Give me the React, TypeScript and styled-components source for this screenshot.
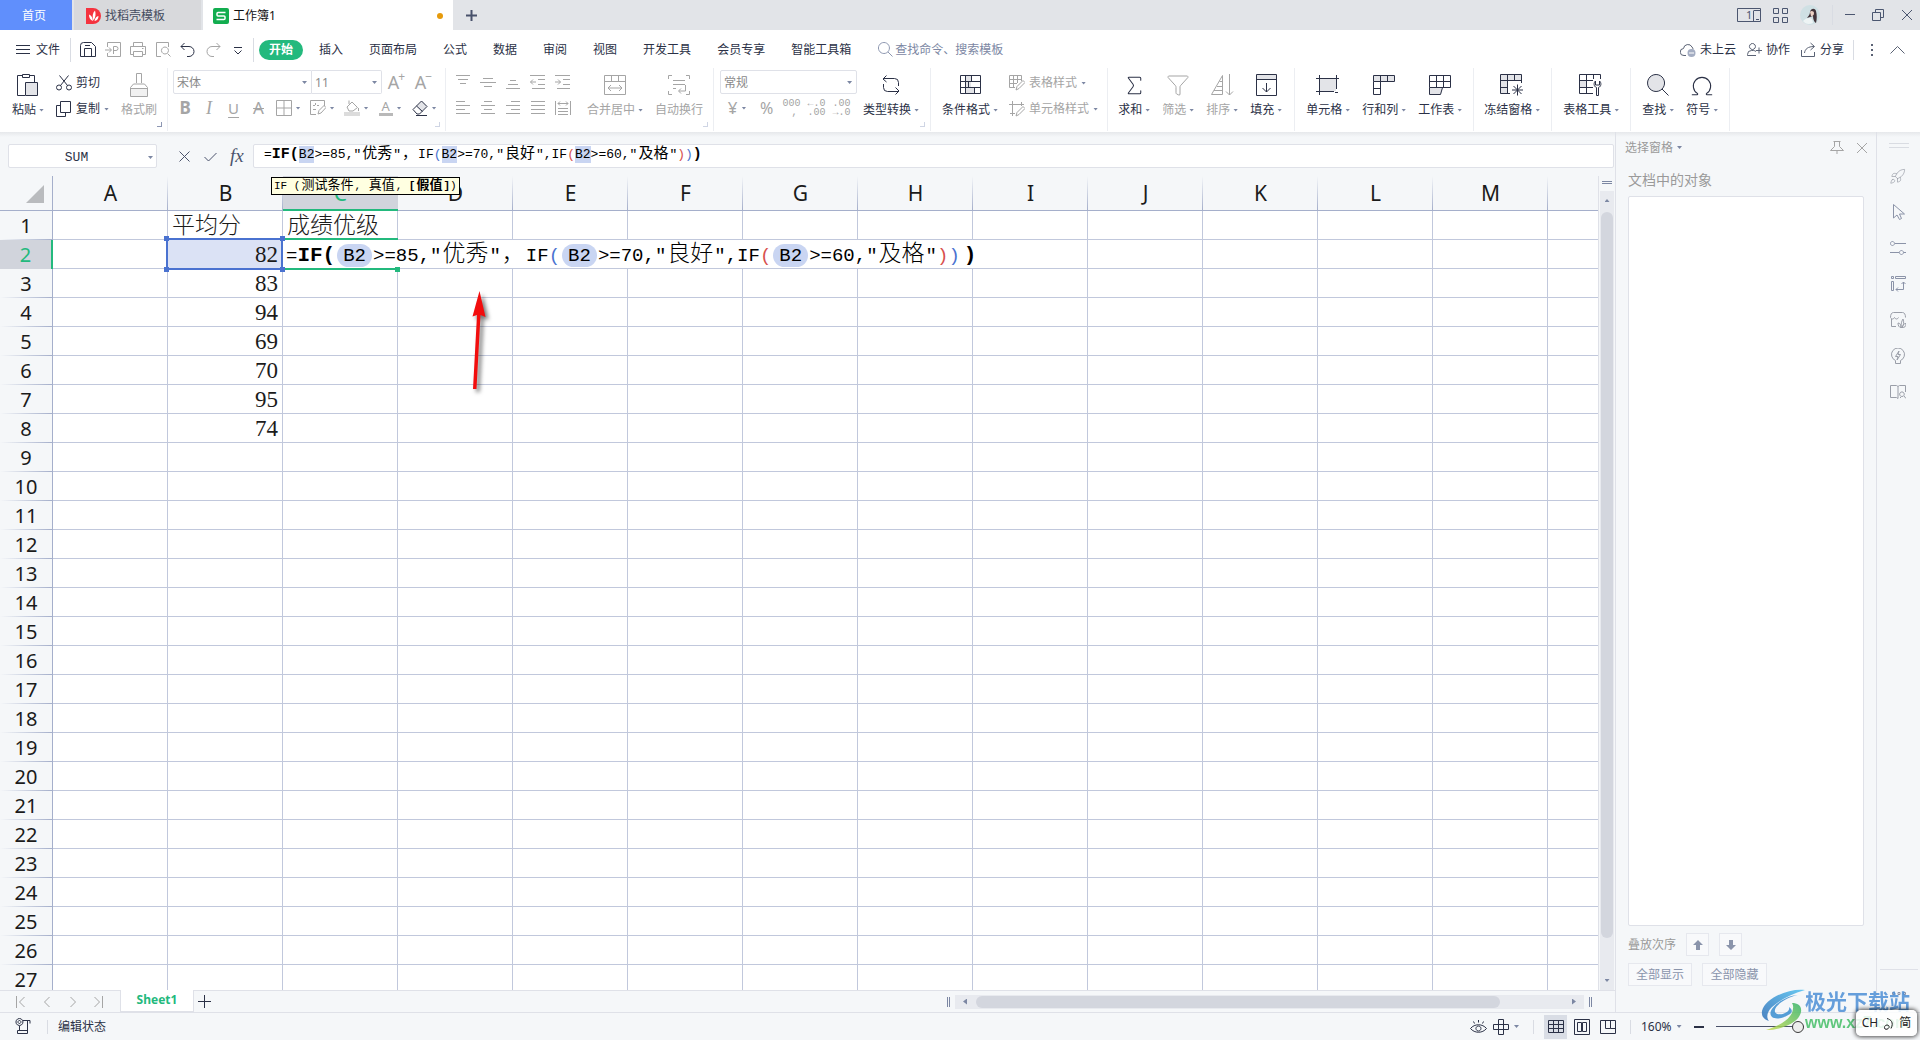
import React from "react";
import styled, { createGlobalStyle, css } from "styled-components";
import { Sigma, Omega, Rocket, Funnel } from "lucide-react";

const ink = "#2b3146";
const gray = "#a5a5a5";
const slate = "#7c87a3";
const line = "#dfe1e8";
const green = "#23b97d";
const blue = "#4a72d0";
const ui = `"Noto Sans", "Noto Sans CJK SC", sans-serif`;
const mono = `"Liberation Mono", "Noto Sans CJK SC", monospace`;
const song = `"Liberation Serif", "Noto Sans CJK SC", serif`;

const GlobalStyle = createGlobalStyle`
  *, *::before, *::after { box-sizing: border-box; }
  body { margin: 0; background: #f5f7f9; color: ${ink}; font: 12px/18px ${ui}; }
  button, input, select { font: inherit; color: inherit; background: none; border: 0; padding: 0; margin: 0; }
  button { white-space: nowrap; cursor: default; }
  svg { display: block; flex: none; }
`;

const Shell = styled.div`
  position: relative;
  display: flex;
  flex-direction: column;
  height: 100vh;
  overflow: hidden;
`;

/* ---------- shared ---------- */
const Caret = styled.span<{ $up?: boolean }>`
  flex: none;
  width: 5px;
  height: 3px;
  background: ${slate};
  clip-path: ${(p) => (p.$up ? "polygon(0 100%, 100% 100%, 50% 0)" : "polygon(0 0, 100% 0, 50% 100%)")};
`;
const SideCaret = styled.span<{ $left?: boolean }>`
  width: 4px;
  height: 6px;
  background: ${slate};
  clip-path: ${(p) => (p.$left ? "polygon(100% 0, 100% 100%, 0 50%)" : "polygon(0 0, 100% 50%, 0 100%)")};
`;
const Rule = styled.span<{ $h: number }>`
  width: 1px;
  height: ${(p) => p.$h}px;
  background: #d9dce3;
`;
const Spacer = styled.div`
  flex: 1;
`;

type IcoProps = { w?: number; h?: number; d: string; c?: string; fill?: string; fillC?: string; sw?: number; children?: React.ReactNode };
const Ico = ({ w = 16, h = 16, d, c = ink, fill, fillC = "#e3e4e8", sw = 1, children }: IcoProps) => (
  <svg width={w} height={h} viewBox={`0 0 ${w} ${h}`} fill="none" stroke={c} strokeWidth={sw} aria-hidden="true">
    {fill && <path d={fill} fill={fillC} stroke="none" />}
    <path d={d} />
    {children}
  </svg>
);

/* ---------- title bar ---------- */
const TitleBar = styled.header`
  display: flex;
  align-items: center;
  flex: none;
  height: 30px;
  background: #e2e4e8;
`;
const DocTab = styled.button<{ $w: number; $bg: string; $c?: string; $pad: number }>`
  display: flex;
  align-items: center;
  gap: 4px;
  width: ${(p) => p.$w}px;
  height: 30px;
  margin-right: 2px;
  padding: 2px ${(p) => p.$pad}px 0;
  background: ${(p) => p.$bg};
  color: ${(p) => p.$c || ink};
`;
const Dot = styled.span`
  width: 6px;
  height: 6px;
  margin-left: auto;
  border-radius: 50%;
  background: #e69a0b;
`;
const AddDoc = styled.button`
  display: flex;
  padding: 0 10px;
`;
const WindowTools = styled.div`
  display: flex;
  align-items: center;
  gap: 12px;
  padding-right: 7px;
  button { display: flex; }
`;
const WinBtns = styled.div`
  display: flex;
  align-items: center;
  gap: 17px;
`;

/* ---------- menu bar ---------- */
const MenuBar = styled.nav`
  display: flex;
  align-items: center;
  flex: none;
  height: 38px;
  padding: 1px 15px 0 16px;
  background: #fff;
`;
const FileBtn = styled.button`
  display: flex;
  align-items: center;
  gap: 6px;
  margin-right: 10px;
`;
const QuickBar = styled.div`
  display: flex;
  align-items: center;
  gap: 9px;
  padding: 0 7px 0 9px;
  button { display: flex; }
`;
const ActiveMenu = styled.button`
  width: 44px;
  height: 20px;
  margin: 0 3px 0 5px;
  border-radius: 10px;
  background: ${green};
  color: #fff;
  font-weight: 700;
`;
const MenuItem = styled.button`
  padding: 0 13px;
`;
const SearchBox = styled.label`
  display: flex;
  align-items: center;
  gap: 2px;
  margin-left: 14px;
  input { width: 130px; color: ${slate}; outline: none; }
  input::placeholder { color: ${slate}; opacity: 1; }
`;
const CloudTools = styled.div`
  display: flex;
  align-items: center;
  gap: 11px;
  button { display: flex; align-items: center; gap: 4px; }
`;
const MoreTools = styled.div`
  display: flex;
  align-items: center;
  gap: 17px;
  margin-left: 9px;
  button { display: flex; }
`;

/* ---------- ribbon ---------- */
const Ribbon = styled.section`
  display: flex;
  flex: none;
  height: 64px;
  background: #fff;
  border-bottom: 1px solid #fff;
`;
const Group = styled.div<{ $gap?: number; $pl?: number; $pr?: number }>`
  position: relative;
  display: flex;
  gap: ${(p) => p.$gap ?? 12}px;
  padding: 0 ${(p) => p.$pr ?? 11}px 0 ${(p) => p.$pl ?? 11}px;
  border-right: 1px solid #eceef2;
`;
const Corner = styled.span<{ $dark?: boolean }>`
  position: absolute;
  right: 5px;
  bottom: 4px;
  width: 5px;
  height: 5px;
  border: solid ${(p) => (p.$dark ? "#8d97b3" : "#cfd5e4")};
  border-width: 0 1px 1px 0;
`;
const Big = styled.button<{ $off?: boolean }>`
  display: flex;
  flex-direction: column;
  align-items: center;
  gap: 4px;
  padding-top: 5px;
  height: 60px;
  color: ${(p) => (p.$off ? gray : ink)};
`;
const BigIcon = styled.span`
  display: grid;
  place-items: center;
  height: 24px;
`;
const Label = styled.span`
  display: flex;
  align-items: center;
  gap: 3px;
`;
const Rows = styled.div`
  display: flex;
  flex-direction: column;
  gap: 2px;
  padding-top: 2px;
`;
const Line = styled.div<{ $gap?: number; $pl?: number }>`
  display: flex;
  align-items: center;
  gap: ${(p) => p.$gap ?? 0}px;
  padding-left: ${(p) => p.$pl ?? 0}px;
  height: 24px;
`;
const Small = styled.button<{ $off?: boolean }>`
  display: flex;
  align-items: center;
  gap: 4px;
  height: 24px;
  padding-top: 2px;
  color: ${(p) => (p.$off ? gray : ink)};
`;
const Cell = styled.button<{ $w?: number }>`
  display: flex;
  align-items: center;
  justify-content: center;
  gap: 4px;
  width: ${(p) => p.$w ?? 25}px;
  height: 24px;
  color: ${gray};
`;
const Glyph = styled.span<{ $b?: boolean; $i?: boolean; $u?: boolean; $s?: boolean; $size?: number }>`
  font-size: ${(p) => p.$size ?? 17}px;
  line-height: 18px;
  font-weight: ${(p) => (p.$b ? 700 : 400)};
  font-style: ${(p) => (p.$i ? "italic" : "normal")};
  text-decoration: ${(p) => (p.$u ? "underline" : p.$s ? "line-through" : "none")};
  text-decoration-thickness: 1px;
  text-underline-offset: 3px;
  ${(p) => p.$i && css`font-family: "Liberation Serif", serif;`}
`;
const BarGlyph = styled.span`
  width: 14px;
  height: 15px;
  border-bottom: 3px solid #b9b9b9;
  font-size: 13px;
  line-height: 11px;
`;
const Sup = styled.span`
  align-self: flex-start;
  margin-left: -5px;
  font-size: 12px;
  line-height: 14px;
`;
const Digits = styled.span`
  display: flex;
  flex-direction: column;
  font: 10px/9px "Liberation Mono", monospace;
  white-space: pre;
`;
const Picker = styled.label<{ $w: number; $side?: "l" | "r" }>`
  position: relative;
  display: block;
  width: ${(p) => p.$w}px;
  height: 24px;
  border: 1px solid ${line};
  border-radius: ${(p) => (p.$side === "l" ? "2px 0 0 2px" : p.$side === "r" ? "0 2px 2px 0" : "2px")};
  ${(p) => p.$side === "r" && css`border-left: 0;`}
  color: #8a8a8a;
  select { width: 100%; height: 22px; padding: 2px 0 0 3px; appearance: none; outline: none; opacity: 1; }
  ${Caret} { position: absolute; right: 4px; top: 10px; }
`;
const Pickers = styled.div`
  display: flex;
`;

/* ---------- body ---------- */
const Body = styled.main`
  display: flex;
  flex: 1;
  min-height: 0;
  border-bottom: 1px solid ${line};
  background: linear-gradient(#e6e8eb, #f5f7f9 5px);
`;
const Sheet = styled.div`
  display: flex;
  flex-direction: column;
  flex: 1;
  min-width: 0;
`;
const FormulaRow = styled.div`
  position: relative;
  z-index: 5;
  display: flex;
  flex: none;
  height: 44px;
  padding: 12px 1px 8px 8px;
`;
const NameBox = styled.label`
  position: relative;
  width: 149px;
  height: 24px;
  border: 1px solid ${line};
  border-radius: 2px;
  background: #fff;
  input { width: 135px; height: 22px; padding-top: 2px; text-align: center; font: 13px ${mono}; outline: none; }
  ${Caret} { position: absolute; right: 3px; top: 11px; }
`;
const FxTools = styled.div`
  display: flex;
  align-items: center;
  gap: 13px;
  width: 96px;
  padding-left: 21px;
  button { display: flex; }
`;
const Fx = styled.span`
  font: italic 19px/20px "Liberation Serif", serif;
  color: #4b536c;
`;
const FormulaInput = styled.div`
  position: relative;
  flex: 1;
  height: 24px;
  padding-left: 10px;
  border: 1px solid ${line};
  border-radius: 2px;
  background: #fff;
`;
const BarText = styled.div`
  color: #000;
  font: 13px/20px ${mono};
  white-space: pre;
  outline: none;
  b { font-size: 15px; }
  i { padding: 0 1px; font-style: normal; font-size: 15px; }
  mark { padding: 1px 0; background: #c9d5f2; color: inherit; }
`;
const Hint = styled.div`
  position: absolute;
  left: 17px;
  top: 32px;
  height: 18px;
  padding: 0 2px;
  border: 1px solid #000;
  background: #ffffe1;
  color: #000;
  font: 11px/16px ${mono};
  white-space: pre;
  i { padding: 0 1px; font-style: normal; font-size: 13px; }
`;
const Red = styled.span`
  color: #d8504d;
`;
const Blue = styled.span`
  color: ${blue};
`;

const GridArea = styled.div`
  display: flex;
  flex: 1;
  min-height: 0;
`;
const Clip = styled.div`
  position: relative;
  flex: 1;
  min-width: 0;
  overflow: hidden;
  background: #fff;
`;
const Table = styled.table`
  width: 100%;
  table-layout: fixed;
  border-spacing: 0;
  color: #1b1b1b;
`;
const CornerHead = styled.th`
  width: 53px;
  height: 35px;
  padding: 0;
  background: #f5f7f9;
  border-right: 1px solid #a5afcb;
  border-bottom: 1px solid #a5afcb;
  &::after {
    content: "";
    display: block;
    width: 18px;
    height: 18px;
    margin: 2px 0 0 26px;
    background: #b9bbbe;
    clip-path: polygon(100% 0, 100% 100%, 0 100%);
  }
`;
const ColHead = styled.th<{ $on?: boolean; $rest?: boolean }>`
  width: ${(p) => (p.$rest ? "auto" : "115px")};
  height: 35px;
  padding: 0;
  border-bottom: ${(p) => (p.$on ? `2px solid ${green}` : "1px solid #a5afcb")};
  background: ${(p) =>
    p.$on
      ? "#d1d4dc"
      : p.$rest
        ? "#f5f7f9"
        : "linear-gradient(#f5f7f9, #a5afcb) right / 1px 100% no-repeat #f5f7f9"};
  color: ${(p) => (p.$on ? green : "#1b1b1b")};
  font: 21px/32px ${ui};
`;
const RowHead = styled.th<{ $on?: boolean }>`
  height: 29px;
  padding: 0;
  border-right: ${(p) => (p.$on ? `2px solid ${green}` : "1px solid #a5afcb")};
  background: ${(p) =>
    p.$on ? "#d1d4dc" : "linear-gradient(90deg, #f5f7f9, #a5afcb) bottom / 100% 1px no-repeat #f5f7f9"};
  color: ${(p) => (p.$on ? green : "#1b1b1b")};
  font: 20px/28px ${ui};
`;
const Td = styled.td<{ $num?: boolean; $ref?: boolean; $rest?: boolean; $z?: number }>`
  position: relative;
  z-index: ${(p) => p.$z ?? "auto"};
  height: 29px;
  padding: 2px 4px 0;
  border-right: ${(p) => (p.$rest ? "0" : "1px solid #c1c8dc")};
  border-bottom: 1px solid #c1c8dc;
  background: ${(p) => (p.$ref ? "#dbe2f5" : "#fff")};
  text-align: ${(p) => (p.$num ? "right" : "left")};
  font: 300 23px/26px ${song};
  white-space: nowrap;
`;
const RefFrame = styled.span`
  position: absolute;
  inset: -2px -1px -2px -2px;
  border: 2px solid ${blue};
`;
const Handle = styled.span<{ $x: "left" | "right"; $y: "top" | "bottom"; $c: string }>`
  position: absolute;
  ${(p) => p.$x}: -4px;
  ${(p) => p.$y}: -4px;
  width: 5px;
  height: 5px;
  background: ${(p) => p.$c};
`;
const CellFrame = styled.span`
  position: absolute;
  inset: -2px -1px -2px 1px;
  border: solid ${green};
  border-width: 2px 0;
  ${Handle} { right: -2px; bottom: -4px; }
`;
const CellEditor = styled.div`
  position: absolute;
  left: 0;
  top: 0;
  height: 28px;
  padding: 2px 6px 0 3px;
  background: #fff;
  color: #000;
  font: 19px/26px ${mono};
  white-space: pre;
  outline: none;
  b { font-size: 21px; }
  b:last-child { margin-left: 4px; }
  i { padding: 0 1px; font-style: normal; font-weight: 300; font-size: 23px; }
  mark {
    display: inline-block;
    height: 23px;
    margin: 0 1px 0 2px;
    padding: 0 6px;
    border-radius: 12px;
    background: #c9d5f2;
    color: inherit;
    line-height: 24px;
  }
`;
const Arrow = styled.svg`
  position: absolute;
  left: 464px;
  top: 112px;
  overflow: visible;
  filter: drop-shadow(3px 3px 2px rgba(0, 0, 0, 0.55));
`;
const Gutter = styled.div`
  display: flex;
  flex-direction: column;
  align-items: center;
  flex: none;
  width: 17px;
  padding-top: 5px;
  border-left: 1px solid ${line};
`;
const SplitMark = styled.span<{ $v?: boolean }>`
  flex: none;
  width: ${(p) => (p.$v ? 3 : 10)}px;
  height: ${(p) => (p.$v ? 10 : 3)}px;
  border: solid ${slate};
  border-width: ${(p) => (p.$v ? "0 1px" : "1px 0")};
`;
const VTrack = styled.div`
  display: flex;
  flex-direction: column;
  align-items: center;
  justify-content: space-between;
  flex: 1;
  width: 14px;
  margin-top: 7px;
  padding: 8px 0;
  background: #e8eaef;
`;
const VThumb = styled.span`
  flex: 1;
  width: 12px;
  margin: 10px 0 41px;
  border-radius: 6px;
  background: #d3d6de;
`;
const SheetBar = styled.div`
  display: flex;
  align-items: center;
  flex: none;
  height: 22px;
  border-top: 1px solid ${line};
`;
const SheetNav = styled.div`
  display: flex;
  gap: 15px;
  width: 120px;
  padding-left: 15px;
  button { display: flex; }
`;
const SheetTab = styled.button`
  width: 74px;
  height: 22px;
  margin-top: -2px;
  border: solid ${line};
  border-width: 0 1px 1px;
  background: #fff;
  color: ${green};
  font-weight: 700;
`;
const AddSheet = styled.button`
  display: flex;
  margin-left: 4px;
`;
const HScroll = styled.div`
  display: flex;
  align-items: center;
  gap: 5px;
  width: 668px;
  padding-right: 23px;
`;
const HTrack = styled.div`
  display: flex;
  align-items: center;
  flex: 1;
  height: 14px;
  padding: 0 8px;
  background: #e8eaef;
`;
const HThumb = styled.span`
  flex: 1;
  height: 12px;
  margin: 0 72px 0 9px;
  border-radius: 6px;
  background: #d3d6de;
`;

/* ---------- side panel ---------- */
const Panel = styled.aside`
  display: flex;
  flex-direction: column;
  flex: none;
  width: 262px;
  padding: 0 12px;
  border: solid ${line};
  border-width: 0 1px;
  color: #9a9a9a;
`;
const PanelHead = styled.div`
  display: flex;
  align-items: center;
  gap: 12px;
  height: 31px;
  margin: 0 -4px 0 -3px;
  button { display: flex; align-items: center; gap: 4px; }
`;
const PanelTitle = styled.h2`
  margin: 6px 0 5px;
  font: 14px/22px ${ui};
`;
const ObjectList = styled.div`
  flex: 1;
  border: 1px solid ${line};
  border-radius: 2px;
  background: #fff;
`;
const OrderRow = styled.div`
  display: flex;
  align-items: center;
  gap: 10px;
  height: 23px;
  margin-top: 7px;
`;
const PanelFoot = styled.div`
  height: 86px;
`;
const PanelBtn = styled.button<{ $w: number }>`
  display: grid;
  place-items: center;
  width: ${(p) => p.$w}px;
  height: 23px;
  border: 1px solid #e6e8ee;
  background: #f8f9fb;
  color: #8a94ab;
`;
const Strip = styled.aside`
  display: flex;
  flex-direction: column;
  align-items: center;
  flex: none;
  width: 43px;
  padding: 11px 0;
`;
const StripIcons = styled.div`
  display: flex;
  flex-direction: column;
  flex: 1;
  padding-top: 10px;
  button { display: grid; place-items: center; width: 40px; height: 36px; padding-right: 2px; }
`;
const StripEnd = styled.div`
  display: flex;
  justify-content: center;
  width: 38px;
  height: 32px;
  padding-top: 21px;
  border-top: 1px solid ${line};
`;

/* ---------- status bar ---------- */
const StatusBar = styled.footer`
  display: flex;
  align-items: center;
  flex: none;
  height: 27px;
  padding-left: 15px;
`;
const StatusRule = styled(Rule)`
  margin: 0 10px 0 15px;
`;
const StatusTools = styled.div`
  display: flex;
  align-items: center;
  width: 450px;
  button { display: flex; align-items: center; justify-content: center; height: 24px; }
`;
const ViewBtn = styled.button<{ $on?: boolean }>`
  width: ${(p) => (p.$on ? 23 : 26)}px;
  background: ${(p) => (p.$on ? "#d9dde5" : "none")};
`;
const ReadBtn = styled.button`
  gap: 4px;
`;
const ZoomBtn = styled.button`
  gap: 5px;
  margin: 0 12px 0 10px;
`;
const Gap = styled.span<{ $w?: number }>`
  width: ${(p) => p.$w ?? 6}px;
`;
const Zoom = styled.input`
  width: 88px;
  height: 16px;
  margin-left: 12px;
  appearance: none;
  background: linear-gradient(#4a5169, #4a5169) center / 100% 1px no-repeat;
  &::-webkit-slider-thumb {
    appearance: none;
    width: 12px;
    height: 12px;
    border: 1px solid #3a3a3a;
    border-radius: 50%;
    background: #ededed;
  }
`;
const Watermark = styled.div`
  position: absolute;
  right: 10px;
  bottom: 8px;
  display: flex;
  opacity: 0.85;
  pointer-events: none;
`;
const MarkText = styled.div`
  display: flex;
  flex-direction: column;
  color: #4d8fd6;
  font: 700 21px/26px ${ui};
  span { color: #45bf68; font: 700 16px/18px "Liberation Sans", sans-serif; }
`;
const Ime = styled.div`
  position: absolute;
  right: 3px;
  bottom: 4px;
  display: flex;
  align-items: center;
  justify-content: center;
  gap: 4px;
  width: 61px;
  height: 26px;
  border-radius: 5px;
  background: rgba(255, 255, 255, 0.85);
  box-shadow: 0 0 4px 1px rgba(0, 0, 0, 0.7);
  color: #222;
`;

/* ---------- data ---------- */
const cols = ["A", "B", "C", "D", "E", "F", "G", "H", "I", "J", "K", "L", "M"];
const scores = [82, 83, 94, 69, 70, 95, 74];
const menus = ["插入", "页面布局", "公式", "数据", "审阅", "视图", "开发工具", "会员专享", "智能工具箱"];

const Formula = () => (
  <>
    =<b>IF(</b>
    <mark>B2</mark>&gt;=85,"<i>优秀</i>"<i>，</i>IF<Blue>(</Blue>
    <mark>B2</mark>&gt;=70,"<i>良好</i>",IF<Red>(</Red>
    <mark>B2</mark>&gt;=60,"<i>及格</i>"<Red>)</Red>
    <Blue>)</Blue>
    <b>)</b>
  </>
);

const BigButton = ({ label, icon, off, caret = true }: { label: string; icon: React.ReactNode; off?: boolean; caret?: boolean }) => (
  <Big $off={off}>
    <BigIcon>{icon}</BigIcon>
    <Label>
      {label}
      {caret && <Caret />}
    </Label>
  </Big>
);

const align = {
  top: "M1 1.5h14M3 5.5h10M5 9.5h6",
  mid: "M3 4.5h10M0 8.5h16M4 12.5h8",
  bot: "M5 6.5h6M3 10.5h10M1 14.5h14",
  outdent: "M0 1.5h15M8 5.5h7M8 10.5h7M2 14.5h13M6 8H0.5M3 5.5L.5 8L3 10.5",
  indent: "M0 1.5h15M8 5.5h7M8 10.5h7M2 14.5h13M0 8h5.5M3 5.5L5.5 8L3 10.5",
  left: "M1 1.5h9M1 5.5h14M1 9.5h9M1 13.5h14",
  center: "M4 1.5h8M1 5.5h14M4 9.5h8M1 13.5h14",
  right: "M6 1.5h9M1 5.5h14M6 9.5h9M1 13.5h14",
  just: "M1 1.5h14M1 5.5h14M1 9.5h14M1 13.5h14",
  dist: "M.5 1v14M15.5 1v14M3 3.5h10M5 1.5L3 3.5L5 5.5M11 1.5L13 3.5L11 5.5M3 8.5h10M3 11.5h10M3 14.5h10",
};

export default function App() {
  return (
    <Shell>
      <GlobalStyle />
      <TitleBar>
        <DocTab $w={72} $bg="#608ffc" $c="#fff" $pad={22}>首页</DocTab>
        <DocTab $w={127} $bg="#d8d9dc" $pad={12} $c="#454c60">
          <svg width="15" height="16" viewBox="0 0 15 16" aria-hidden="true">
            <path d="M0 0h7a8 8 0 0 1 0 16H0z" fill="#f5333f" />
            <path d="M7 13C4 12 3 9.500 3 6.500c2 .5 3.500 2.500 4 6.500zM7.500 12.500C6 8.500 6.500 5 9 2.500c1 3 .8 7-1.500 10zM8.500 13c.5-3 2-4.500 4-5 0 3-1.500 4.500-4 5z" fill="#fff" />
          </svg>
          找稻壳模板
        </DocTab>
        <DocTab $w={250} $bg="#fff" $pad={10} $c="#111">
          <svg width="16" height="16" viewBox="0 0 16 16" aria-hidden="true">
            <rect width="16" height="16" rx="2" fill="#12ad4f" />
            <path d="M12.500 4.500H5a1 1 0 0 0-1 1v1.500a1 1 0 0 0 1 1h6a1 1 0 0 1 1 1v1.500a1 1 0 0 1-1 1H3.500" fill="none" stroke="#fff" strokeWidth="1.500" />
          </svg>
          工作簿1
          <Dot />
        </DocTab>
        <AddDoc aria-label="新建"><Ico w={13} h={13} d="M6.500 1v11M1 6.500h11" c="#48516b" sw={2} /></AddDoc>
        <Spacer />
        <WindowTools>
          <button aria-label="设备">
            <svg width="24" height="15" viewBox="0 0 24 15" fill="none" stroke="#4b5670" aria-hidden="true">
              <path d="M.5 .5h23v13H.5zM16.500 3v10.500M23 2.500h-6.500M19 11.500h3" />
              <text x="9" y="11" fontSize="11" fill="#4b5670" stroke="none" fontFamily="Noto Sans">1</text>
            </svg>
          </button>
          <button aria-label="应用"><Ico w={15} h={15} c="#4b5670" d="M.5 .5h5v5h-5zM9.500 .5h5v5h-5zM.5 9.500h5v5h-5zM9.500 9.500h5v5h-5z" /></button>
          <button aria-label="账户">
            <svg width="20" height="20" viewBox="0 0 20 20" aria-hidden="true">
              <circle cx="10" cy="10" r="10" fill="#cfe0e4" />
              <path d="M10 7c1-4 5-4 6-1 1 4 1 8 0 12-2-1-3-4-3-7-2 1-4 1-6 2 1-2 3-3 3-6z" fill="#41343a" />
              <path d="M10 7c1-2 4-1 4 1s-2 4-3 3z" fill="#ecd3c6" />
              <path d="M3 16c3-3 6-4 9-2l1 4c-4 2-8 1-10-2z" fill="#eef4f5" />
            </svg>
          </button>
          <Rule $h={20} />
          <WinBtns>
            <button aria-label="最小化"><Ico w={10} h={12} d="M0 5.500h10" c="#4b5670" /></button>
            <button aria-label="还原"><Ico w={12} h={12} d="M.5 3.500h8v8h-8zM3.500 3.500v-3h8v8h-3" c="#4b5670" /></button>
            <button aria-label="关闭"><Ico w={12} h={12} d="M1 1l10 10M11 1L1 11" c="#4b5670" /></button>
          </WinBtns>
        </WindowTools>
      </TitleBar>

      <MenuBar>
        <FileBtn><Ico w={14} h={12} d="M0 1.500h14M0 5.500h14M0 9.500h14" />文件</FileBtn>
        <Rule $h={24} />
        <QuickBar>
          <button aria-label="保存"><Ico d="M.5 3.500v11h15v-10l-4-4h-8a3 3 0 0 0-3 3zM4.500 14v-7.500h7V14M5 3.500h5" /></button>
          <button aria-label="输出为PDF"><Ico c={gray} d="M2.500 5V.5h13v14h-13V11M0 8h6M4 5.500L6.500 8L4 10.500M8.500 12V4.500h2.500a2 2 0 0 1 0 4H8.500" /></button>
          <button aria-label="打印"><Ico c={gray} d="M3.500 4V.5h9V4M3 12.500H.5v-8h15v8H13M3.500 9.500h9v5h-9zM12 6.500h1.500" /></button>
          <button aria-label="打印预览"><Ico c={gray} d="M6 14.500H1.500V.5h12V5M10 12a3.500 3.500 0 1 0-.1 0zM12.500 11.500l3 3" /></button>
          <button aria-label="撤销"><Ico d="M1 4.500h8a4.500 4.500 0 0 1 0 10H7M4.500 1L1 4.500L4.500 8" /></button>
          <button aria-label="恢复"><Ico c={gray} d="M15 4.500H7a4.500 4.500 0 0 0 0 10h2M11.500 1L15 4.500L11.500 8" /></button>
          <button aria-label="更多"><Ico w={16} h={12} d="M4 3.500h8M4.500 6.500L8 10L11.500 6.500" /></button>
        </QuickBar>
        <Rule $h={24} />
        <ActiveMenu>开始</ActiveMenu>
        {menus.map((m) => <MenuItem key={m}>{m}</MenuItem>)}
        <SearchBox>
          <Ico w={15} h={15} c="#8d97b0" d="M6 11.500a5.500 5.500 0 1 0-.1 0zM10 10l4.500 4.500" />
          <input placeholder="查找命令、搜索模板" aria-label="查找命令、搜索模板" />
        </SearchBox>
        <Spacer />
        <CloudTools>
          <button>
            <Ico c="#5a6274" d="M6 13.500H4a3.500 3.500 0 0 1-.5-7A4.500 4.500 0 0 1 12 5c.8.800 1 1.500 1 2.500">
              <circle cx="11.500" cy="11" r="4" fill="#a4adc2" stroke="none" /><path d="M9 11h5" stroke="#fff" />
            </Ico>
            未上云
          </button>
          <button><Ico w={15} c="#5a6274" d="M5.500 7.500a3 3 0 1 0-.1 0zM9 13.500H.5v-1a4 4 0 0 1 4-4h2a4 4 0 0 1 2.500 1M12 5.500v6M9 8.500h6" />协作</button>
          <button><Ico w={15} c="#5a6274" d="M.5 8v6.500h13V10M3.500 11C4 7 7 4.500 13 4.500M9.500 1L13.500 4.500L9.500 8" />分享</button>
        </CloudTools>
        <MoreTools>
          <Rule $h={20} />
          <button aria-label="更多选项"><Ico w={2} h={12} c="#5a6274" sw={2} d="M1 0v2M1 5v2M1 10v2" /></button>
          <button aria-label="收起功能区"><Ico w={15} h={10} c="#5a6274" d="M.5 8.500L7.500 1.500L14.500 8.500" /></button>
        </MoreTools>
      </MenuBar>

      <Ribbon>
        <Group $pl={12} $pr={10}>
          <BigButton label="粘贴" icon={<Ico w={22} h={24} fill="M9 10h12v13H9z" d="M5 2.500H.5v20H8M13 2.500h4.500V9M5.500 1.500h7v3h-7zM8.500 9.500h12v13h-12z" />} />
          <Rows>
            <Small>
              <Ico d="M4.500 10.500L12.500 .5M11.500 10.500L3.500 .5">
                <circle cx="3" cy="12.500" r="2.500" /><circle cx="13" cy="12.500" r="2.500" />
              </Ico>
              剪切
            </Small>
            <Small><Ico d="M4.500 .5h10v11h-10zM4 4.500H.5v11h9V12" />复制<Caret /></Small>
          </Rows>
          <BigButton off caret={false} label="格式刷" icon={<Ico w={18} h={24} c={gray} fill="M1 15h16v8H1z" fillC="#f1f1f1" d="M6.500 10V.5h5V10M.5 23.500v-9l3-3.500h11l3 3.500v9zM.5 15.500h17" />} />
          <Corner $dark />
        </Group>

        <Group $pl={5} $pr={4}>
          <Rows>
            <Line>
              <Pickers>
                <Picker $w={139} $side="l"><select aria-label="字体"><option>宋体</option></select><Caret /></Picker>
                <Picker $w={70} $side="r"><select aria-label="字号"><option>11</option></select><Caret /></Picker>
              </Pickers>
              <Cell $w={29} aria-label="增大字号"><Glyph $size={18}>A</Glyph><Sup>+</Sup></Cell>
              <Cell aria-label="减小字号"><Glyph $size={18}>A</Glyph><Sup>−</Sup></Cell>
            </Line>
            <Line>
              <Cell $w={24} aria-label="加粗"><Glyph $b>B</Glyph></Cell>
              <Cell $w={24} aria-label="倾斜"><Glyph $i $size={18}>I</Glyph></Cell>
              <Cell aria-label="下划线"><Glyph $u $size={15}>U</Glyph></Cell>
              <Cell aria-label="删除线"><Glyph $s>A</Glyph></Cell>
              <Cell $w={34} aria-label="边框"><Ico c={gray} d="M.5 .5h15v15H.5zM8 .5v15M.5 8h15" /><Caret /></Cell>
              <Cell $w={34} aria-label="绘图边框"><Ico c={gray} d="M14.500 6V.5H.5v14H6M3 5.500h2M7 5.500h2M5.500 3v2M3 9.500h3M8 14l1-3.500L14 5.500l2 2L11 13z" /><Caret /></Cell>
              <Cell $w={34} aria-label="填充颜色"><Ico c={gray} d="M3 7l5-5l5.500 5.500L9 11H5zM5 4V.5M14.500 8v3" fill="M0 12h16v4H0z" fillC="#dcdcdc" /><Caret /></Cell>
              <Cell $w={34} aria-label="字体颜色"><BarGlyph>A</BarGlyph><Caret /></Cell>
              <Cell $w={34} aria-label="清除"><Ico fill="M5 6L10 1l5 5l-6 6z" d="M1 9.500L9.500 1L15 6.500L7.500 14H5zM4.500 6l6 5.500M4 15.500h11" /><Caret /></Cell>
            </Line>
          </Rows>
          <Corner />
        </Group>

        <Group $pl={4} $pr={10} $gap={12}>
          <Rows>
            <Line>
              {[align.top, align.mid, align.bot, align.outdent, align.indent].map((d) => <Cell key={d}><Ico c={gray} d={d} /></Cell>)}
            </Line>
            <Line>
              {[align.left, align.center, align.right, align.just, align.dist].map((d) => <Cell key={d}><Ico c={gray} d={d} /></Cell>)}
            </Line>
          </Rows>
          <BigButton off label="合并居中" icon={<Ico w={22} h={20} c={gray} d="M.5 .5h21v19H.5zM.5 6.500h21M7.500 .5v6M14.500 .5v6M4 13h14M7 10L4 13L7 16M15 10L18 13L15 16" />} />
          <BigButton off caret={false} label="自动换行" icon={<Ico w={22} h={20} c={gray} d="M4 .5H.5V4M18 .5h3.500V4M.5 16v3.500H4M21.500 16v3.500H18M5 5.500h12M5 9.500h12M5 13.500h3M17.500 10v6H11M13 13.500L10.500 16L13 18.500" />} />
          <Corner />
        </Group>

        <Group $pl={6} $gap={6}>
          <Rows>
            <Line>
              <Picker $w={137}><select aria-label="数字格式"><option>常规</option></select><Caret /></Picker>
            </Line>
            <Line>
              <Cell $w={34} aria-label="货币"><Glyph>¥</Glyph><Caret /></Cell>
              <Cell aria-label="百分比"><Glyph $size={16}>%</Glyph></Cell>
              <Cell aria-label="千位分隔"><Digits><span>000</span><span> ,</span></Digits></Cell>
              <Cell aria-label="增加小数位"><Digits><span>←.0</span><span>.00</span></Digits></Cell>
              <Cell aria-label="减少小数位"><Digits><span>.00</span><span>→.0</span></Digits></Cell>
            </Line>
          </Rows>
          <BigButton label="类型转换" icon={<Ico w={18} h={20} d="M4.500 .5L1 4L4.500 7M1 3.500h11.500a4 4 0 0 1 4 4V11M13.500 12.500L17 16L13.500 19.500M17 16.500H5.500a4 4 0 0 1-4-4V9" />} />
          <Corner />
        </Group>

        <Group $pl={11} $pr={9} $gap={11}>
          <BigButton label="条件格式" icon={<Ico w={21} h={20} fill="M6 1h5v12H6zM6 13h9v6H6z" d="M.5 .5h20v18H.5zM.5 6.500h20M.5 12.500h20M5.500 .5v18M11.500 .5v6M8.500 6.500v6M14.500 12.500v6" />} />
          <Rows>
            <Small $off><Ico c={gray} d="M.5 .5h12V6M.5 .5v12H6M.5 4.500h12M.5 8.500H8M4.500 .5v12M8.500 .5V8M7 15l1-3.500L14 5.500l2 2L10 13.500z" />表格样式<Caret /></Small>
            <Small $off><Ico c={gray} d="M0 3.500h15M3.500 0v15M12.500 1v4M1 12.500h5M7 15l1-3.500L14 5.500l2 2L10 13.500z" />单元格样式<Caret /></Small>
          </Rows>
        </Group>

        <Group $pl={10} $pr={12}>
          <BigButton label="求和" icon={<Sigma size={25} strokeWidth={1} />} />
          <BigButton off label="筛选" icon={<Funnel size={24} strokeWidth={1} />} />
          <BigButton off label="排序" icon={<Ico w={23} h={22} c={gray} d="M.5 20.500L11.500 1.500v19zM6 12.500h5.500M8.500 7.500h3M3 16.500h8.500M18.500 0v21M15 17.500L18.500 21L22 17.500" />} />
          <BigButton label="填充" icon={<Ico w={21} h={22} fill="M1 1h19v5H1z" d="M.5 .5h20v21H.5zM.5 5.500h20M10.500 9v9M6.500 14L10.500 18L14.500 14" />} />
        </Group>
        <Group $pl={11}>
          <BigButton label="单元格" icon={<Ico w={24} h={20} fill="M4 4h16v12H4z" d="M0 3.500h23M0 16.500h18M3.500 0v20M20.500 0v14M19 17.500h3" />} />
          <BigButton label="行和列" icon={<Ico w={22} h={20} fill="M1 1h20v6H1z" d="M.5 .5h21v6H.5zM.5 6.500v13h7v-13M7.500 .5v6M14.500 .5v6M.5 13.500h7" />} />
          <BigButton label="工作表" icon={<Ico w={22} h={20} fill="M1 13h13l-2 6H1z" d="M.5 .5h21v12H.5zM.5 6.500h21M7.500 .5v12M14.500 .5v12M.5 12.500v7h11l2-7" />} />
        </Group>
        <Group $pl={10}>
          <BigButton label="冻结窗格" icon={<Ico w={24} h={22} fill="M1 1h20v5H7v13H1z" d="M21.500 9V.5H.5v19H10M.5 6.500h21M.5 13.500h7M7.500 .5v19M14.500 .5v6M17.500 10.500v11M12 16h11M13.500 12l8 8M21.500 12l-8 8" />} />
        </Group>
        <Group>
          <BigButton label="表格工具" icon={<Ico w={24} h={22} fill="M1 7h6v6H1z" d="M21.500 5V.5H.5v19H14M.5 6.500H14M.5 13.500H14M7.500 .5v19M14.500 .5V5M17.500 21.500v-8c-3-1-3-5-1-6.500v4h4V7c2 1.500 2 5.500-1 6.500v8z" />} />
        </Group>
        <Group>
          <BigButton label="查找" icon={<Ico w={22} h={22} fill="M9 .5a8.500 8.500 0 1 0 .1 0z" d="M9 .5a8.500 8.500 0 1 0 .1 0zM15 15l6.500 6.500" />} />
          <BigButton label="符号" icon={<Omega size={26} strokeWidth={1} />} />
        </Group>
      </Ribbon>

      <Body>
        <Sheet>
          <FormulaRow>
            <NameBox><input defaultValue="SUM" aria-label="名称框" /><Caret /></NameBox>
            <FxTools>
              <button aria-label="取消"><Ico w={13} h={13} c="#4b536c" d="M1.500 1.500l10 10M11.500 1.500l-10 10" /></button>
              <button aria-label="输入"><Ico w={13} h={13} c="#4b536c" d="M.5 7L4.500 11L12.500 3" /></button>
              <button aria-label="插入函数"><Fx>fx</Fx></button>
            </FxTools>
            <FormulaInput>
              <BarText role="textbox" aria-label="编辑栏"><Formula /></BarText>
              <Hint role="tooltip">IF (<i>测试条件</i>, <i>真值</i>, <b>[<i>假值</i>]</b>)</Hint>
            </FormulaInput>
          </FormulaRow>

          <GridArea>
            <Clip>
              <Table>
                <thead>
                  <tr>
                    <CornerHead aria-label="全选" />
                    {cols.map((c) => <ColHead key={c} $on={c === "C"}>{c}</ColHead>)}
                    <ColHead $rest />
                  </tr>
                </thead>
                <tbody>
                  {Array.from({ length: 27 }, (_, i) => i + 1).map((r) => (
                    <tr key={r}>
                      <RowHead $on={r === 2}>{r}</RowHead>
                      {cols.map((c) => {
                        if (c === "B" && r === 2)
                          return (
                            <Td key={c} $num $ref $z={3}>
                              {scores[0]}
                              <RefFrame>
                                <Handle $x="left" $y="top" $c={blue} />
                                <Handle $x="right" $y="top" $c={blue} />
                                <Handle $x="left" $y="bottom" $c={blue} />
                                <Handle $x="right" $y="bottom" $c={blue} />
                              </RefFrame>
                            </Td>
                          );
                        if (c === "C" && r === 2)
                          return (
                            <Td key={c} $z={2}>
                              <CellEditor role="textbox" aria-label="C2"><Formula /></CellEditor>
                              <CellFrame><Handle $x="right" $y="bottom" $c={green} /></CellFrame>
                            </Td>
                          );
                        if (c === "B") return <Td key={c} $num={r > 1}>{r === 1 ? "平均分" : scores[r - 2]}</Td>;
                        return <Td key={c}>{c === "C" && r === 1 ? "成绩优级" : null}</Td>;
                      })}
                      <Td $rest />
                    </tr>
                  ))}
                </tbody>
              </Table>
              <Arrow width="34" height="110" viewBox="0 0 34 110" aria-hidden="true">
                <path d="M15.500 3L21.500 29L16.500 27L12.500 101H9L13 27L8.500 28.500z" fill="#f20d0d" />
              </Arrow>
            </Clip>
            <Gutter>
              <SplitMark />
              <VTrack><Caret $up /><VThumb /><Caret /></VTrack>
            </Gutter>
          </GridArea>

          <SheetBar>
            <SheetNav>
              <button aria-label="第一张"><Ico w={11} h={12} c={gray} d="M1.500 0v12M9.500 1L4.500 6L9.500 11" /></button>
              <button aria-label="上一张"><Ico w={11} h={12} c={gray} d="M8.500 1L3.500 6L8.500 11" /></button>
              <button aria-label="下一张"><Ico w={11} h={12} c={gray} d="M3.500 1L8.500 6L3.500 11" /></button>
              <button aria-label="最后一张"><Ico w={11} h={12} c={gray} d="M9.500 0v12M1.500 1L6.500 6L1.500 11" /></button>
            </SheetNav>
            <SheetTab>Sheet1</SheetTab>
            <AddSheet aria-label="新建工作表"><Ico w={13} h={13} d="M6.500 0v13M0 6.500h13" /></AddSheet>
            <Spacer />
            <HScroll>
              <SplitMark $v />
              <HTrack><SideCaret $left /><HThumb /><SideCaret /></HTrack>
              <SplitMark $v />
            </HScroll>
          </SheetBar>
        </Sheet>

        <Panel>
          <PanelHead>
            <button>选择窗格<Caret /></button>
            <Spacer />
            <button aria-label="固定"><Ico w={14} h={14} c={gray} d="M3.500 .5h7M4.500 .5v5l-4 4h13l-4-4v-5M7 9.500V13" /></button>
            <button aria-label="关闭窗格"><Ico w={12} h={12} c={gray} d="M1 1l10 10M11 1L1 11" /></button>
          </PanelHead>
          <PanelTitle>文档中的对象</PanelTitle>
          <ObjectList />
          <PanelFoot>
            <OrderRow>
              叠放次序
              <PanelBtn $w={23} aria-label="上移一层"><Ico w={10} h={10} c="none" fill="M5 0l5 5H7v5H3V5H0z" fillC="#8a94ab" d="" /></PanelBtn>
              <PanelBtn $w={23} aria-label="下移一层"><Ico w={10} h={10} c="none" fill="M5 10l5-5H7V0H3v5H0z" fillC="#8a94ab" d="" /></PanelBtn>
            </OrderRow>
            <OrderRow>
              <PanelBtn $w={64}>全部显示</PanelBtn>
              <PanelBtn $w={65}>全部隐藏</PanelBtn>
            </OrderRow>
          </PanelFoot>
        </Panel>

        <Strip>
          <Ico w={20} h={5} c="#d9dce2" d="M0 .5h20M0 4.500h20" />
          <StripIcons>
            <button aria-label="快捷"><Rocket size={17} strokeWidth={1} color="#9a9ea8" /></button>
            <button aria-label="选择"><Ico c="#8b93a8" d="M3.500 .5v13.500l3.500-3L9.500 15.500l2-1L9.500 10H14.500z" /></button>
            <button aria-label="属性"><Ico c="#8b93a8" d="M5 3.500h11M0 12.500h9M13.500 12.500H16M2.500 5.500a2 2 0 1 0-.1 0zM11.500 14.500a2 2 0 1 0-.1 0z" /></button>
            <button aria-label="布局"><Ico c="#8b93a8" d="M1.500 .5h2v2h-2zM5.500 .5h10v2h-10zM1.500 5.500h2v9h-2zM6 13.500h7.500V6M8 11.500L6 13.500L8 15.500M11.500 8L13.500 6L15.500 8" /></button>
            <button aria-label="稻壳"><Ico c="#9a9ea8" d="M6 14.500H1.500V7M.5 5.500c0-3 1-5 3-5h9c2 0 3 2 3 5M.5 5.500c1 2 3 2 4 0c1 2 3 2 4 0M8 11c2 0 3 2 3 4.500c0-4 .5-6 2-8.500c1 3 1 6-1 8.500c1-3 2-4 4-4c0 3-1 4-4 4H11c-2 0-3-2-3-4.500z" /></button>
            <button aria-label="创意"><Ico c="#9a9ea8" d="M5.500 12.500a6.500 6.500 0 1 1 5 0v3h-5zM9 3L5.500 8.500H8L7 12L10.500 6.500H8z" /></button>
            <button aria-label="帮助"><Ico c="#9a9ea8" d="M15.500 8V1.500H9.500L8 2.500L6.500 1.500H.5v12H6.500L8 14.500V2.500M10 13.500h1M12 12.500a2.300 2.300 0 1 0-.1 0zM14 12l2 2.500" /></button>
          </StripIcons>
          <StripEnd><Ico w={16} h={4} c="#8b93a8" d="M1.500 1.500h2v2h-2zM7 1.500h2v2H7zM12.500 1.500h2v2h-2z" /></StripEnd>
        </Strip>
      </Body>

      <StatusBar>
        <Ico w={17} h={17} d="M4.500 7.500a3.500 3.500 0 1 0-.1 0zM4.500 5.500a1.500 1.500 0 1 0-.1 0zM4.500 8v4M2.500 12.500h10v3h-10zM8 2.500h7v3M12.500 3v12" />
        <StatusRule $h={14} />
        <span>编辑状态</span>
        <Spacer />
        <StatusTools>
          <button aria-label="护眼模式"><Ico w={17} h={16} d="M.5 9.500c4-5 12-5 16 0c-4 5-12 5-16 0zM8.500 12a2.500 2.500 0 1 0-.1 0zM8.500 1v2.500M3.500 2.500l1 2M13.500 2.500l-1 2" /></button>
          <Gap />
          <ReadBtn aria-label="阅读模式"><Ico w={17} h={16} d="M5.500 .5h5v15h-5zM.5 5.500h15v5H.5z" /><Caret /></ReadBtn>
          <Gap $w={14} />
          <Rule $h={14} />
          <Gap $w={10} />
          <ViewBtn $on aria-label="普通视图"><Ico w={16} h={13} d="M.5 .5h15v12H.5zM.5 4.500h15M.5 8.500h15M5.500 .5v12M10.500 .5v12" /></ViewBtn>
          <Gap $w={2} />
          <ViewBtn aria-label="分页预览"><Ico w={16} h={16} d="M.5 .5h15v15H.5zM3.500 3.500h4v9h-4zM8.500 3.500h4v9h-4z" /></ViewBtn>
          <ViewBtn aria-label="页面布局视图"><Ico w={17} h={14} d="M.5 .5h15v13H.5zM5.500 .5v8h5v-8M10.500 8.500h5" /></ViewBtn>
          <Gap $w={9} />
          <Rule $h={14} />
          <ZoomBtn>160%<Caret /></ZoomBtn>
          <button aria-label="缩小"><Ico w={10} h={4} sw={2} d="M0 2h10" /></button>
          <Zoom type="range" min={10} max={160} defaultValue={160} aria-label="显示比例" />
        </StatusTools>
      </StatusBar>

      <Watermark>
        <svg width="44" height="44" viewBox="0 0 44 44" aria-hidden="true">
          <defs>
            <linearGradient id="sky" x1="0" y1="1" x2="1" y2="0"><stop offset="0" stopColor="#2f6fb8" /><stop offset="1" stopColor="#4fc0f0" /></linearGradient>
            <linearGradient id="leaf" x1="0" y1="1" x2="1" y2="0"><stop offset="0" stopColor="#c8dc50" /><stop offset="1" stopColor="#35b46a" /></linearGradient>
          </defs>
          <path d="M44 2C28 0 4 10 1 23c-1 6 3 9 7 10c-3-4-2-9 3-14C19 12 30 6 44 2z" fill="url(#sky)" />
          <path d="M37 7C26 9 12 18 14 24c2 5 16 1 14-5c3 2 4 5 1 7c-6 4-14 6-18 3C4 22 22 8 37 7z" fill="#3b8fd0" />
          <path d="M31 15c6 0 10 3 9 9C38 35 20 42 5 42c12-4 22-9 26-17c1-4 2-7 0-10z" fill="url(#leaf)" />
        </svg>
        <MarkText>极光下载站<span>www.xz7.com</span></MarkText>
      </Watermark>
      <Ime>
        CH
        <Ico w={13} h={13} c="#222" d="M3 12a2.500 2.500 0 0 1 2-4c1.500 0 2.500 1 2 2.500c-1 2-3 2-4 1.500M5 1.500c4 1 7 4 4 10" />
        简
      </Ime>
    </Shell>
  );
}
